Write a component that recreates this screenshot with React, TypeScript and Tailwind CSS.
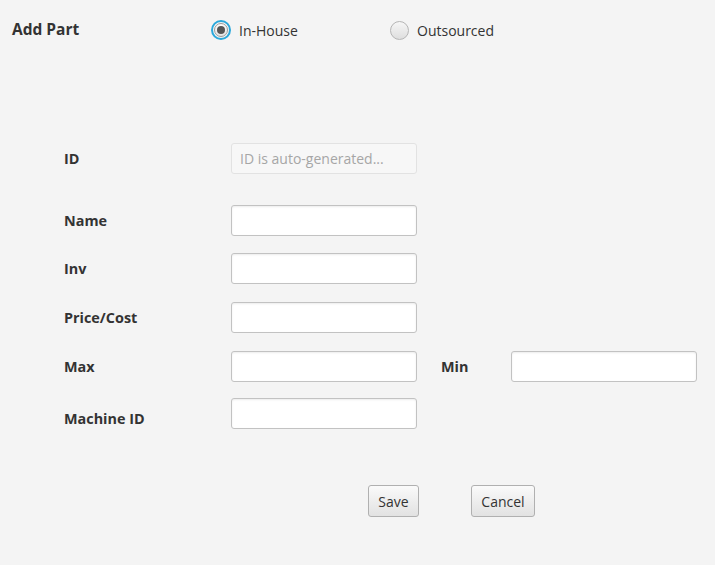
import { useState } from "react"

type RowProps = {
    label: string,
    labelClass?: string,
    children: React.ReactNode,
    className?: string,
}

function Row({ label, labelClass, children, className }: RowProps) {
    return (
        <div className={`flex items-center h-[31px] ${className ?? ""}`}>
            <div className={`w-[231px] pl-[64px] font-bold text-[14.4px] text-[#333] ${labelClass ?? ""}`}>{label}</div>
            {children}
        </div>
    )
}

function Field({ disabled, placeholder }: { disabled?: boolean, placeholder?: string }) {
    if (disabled) {
        return (
            <div className="w-[186px] h-[31px] rounded-[3px] border border-[#e2e2e2] bg-[#f7f7f7] px-[8px] flex items-center text-[14px] text-[#a6a6a6]">
                {placeholder}
            </div>
        )
    }
    return (
        <input
            className="w-[186px] h-[31px] rounded-[3px] border border-[#c2c2c2] bg-white px-[8px] text-[14px] outline-none shadow-[inset_0_1px_2px_rgba(0,0,0,0.08)]"
        />
    )
}

function Radio({ checked, label, onClick }: { checked: boolean, label: string, onClick: () => void }) {
    return (
        <button onClick={onClick} className="flex items-center gap-[8px] text-[14px] text-[#333]">
            {checked ? (
                <span className="w-[20px] h-[20px] rounded-full border-2 border-[#2ba8db] flex items-center justify-center">
                    <span className="w-[14px] h-[14px] rounded-full border border-[#9a9a9a] bg-gradient-to-b from-[#fdfdfd] to-[#e4e4e4] flex items-center justify-center">
                        <span className="w-[8px] h-[8px] rounded-full bg-[#555]" />
                    </span>
                </span>
            ) : (
                <span className="w-[20px] h-[20px] flex items-center justify-center">
                    <span className="w-[19px] h-[19px] rounded-full border border-[#b5b5b5] bg-gradient-to-b from-[#f6f6f6] to-[#dedede]" />
                </span>
            )}
            {label}
        </button>
    )
}

export default function App() {
    const [source, setSource] = useState("inhouse")

    return (
        <div className="w-[715px] h-[565px] bg-[#f4f4f4] font-['Open_Sans','Noto_Sans',sans-serif]">
            <div className="h-[60px] flex items-center">
                <div className="w-[211px] pl-[12px] font-bold text-[15.5px] text-[#333]">Add Part</div>
                <div className="w-[178px]">
                    <Radio checked={source === "inhouse"} label="In-House" onClick={() => setSource("inhouse")} />
                </div>
                <Radio checked={source === "outsourced"} label="Outsourced" onClick={() => setSource("outsourced")} />
            </div>

            <div className="mt-[83px]">
                <Row label="ID">
                    <Field disabled placeholder="ID is auto-generated..." />
                </Row>
                <Row label="Name" className="mt-[31px]">
                    <Field />
                </Row>
                <Row label="Inv" labelClass="pl-[63px]" className="mt-[17px]">
                    <Field />
                </Row>
                <Row label="Price/Cost" className="mt-[18px]">
                    <Field />
                </Row>
                <Row label="Max" className="mt-[18px]">
                    <Field />
                    <div className="w-[94px] pl-[24px] font-bold text-[14.4px] text-[#333]">Min</div>
                    <Field />
                </Row>
                <Row label="Machine ID" labelClass="pt-[10px]" className="mt-[16px]">
                    <Field />
                </Row>
            </div>

            <div className="mt-[56px] flex pl-[368px] gap-[52px]">
                <button className="h-[32px] w-[51px] rounded-[3px] border border-[#b0b0b0] bg-gradient-to-b from-[#fafafa] to-[#e2e2e2] text-[14px] text-[#333]">Save</button>
                <button className="h-[32px] w-[64px] rounded-[3px] border border-[#b0b0b0] bg-gradient-to-b from-[#fafafa] to-[#e2e2e2] text-[14px] text-[#333]">Cancel</button>
            </div>
        </div>
    )
}
